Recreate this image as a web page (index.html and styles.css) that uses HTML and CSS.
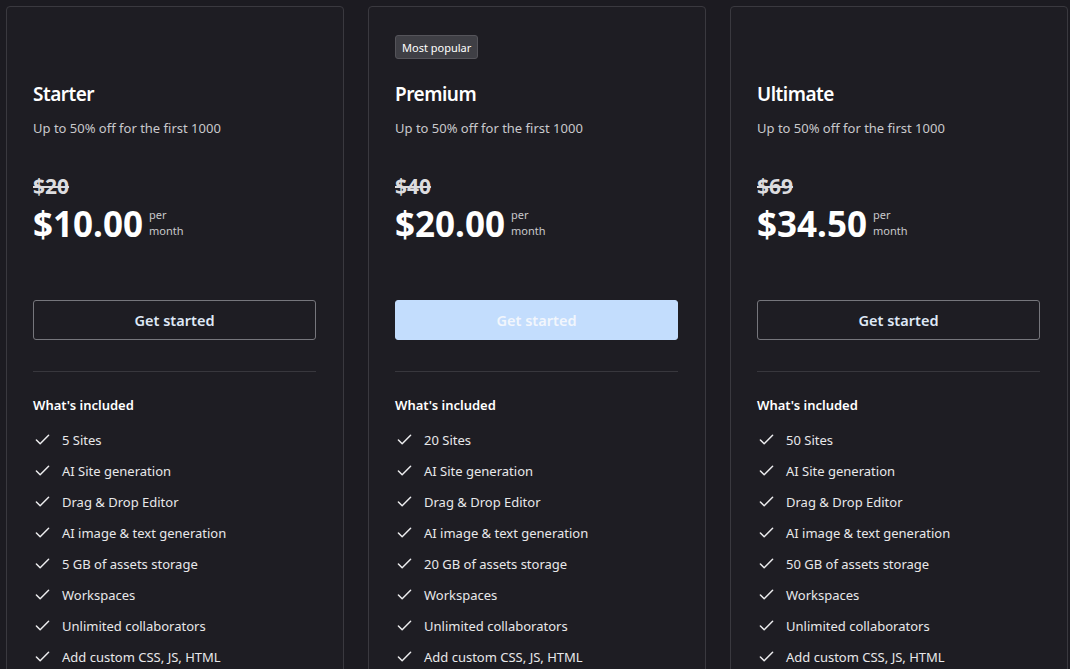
FILE: index.html
```html
<!DOCTYPE html>
<html lang="en">
<head>
<meta charset="utf-8">
<title>Pricing</title>
<link rel="stylesheet" href="styles.css">
</head>
<body>
<main class="plans">
  <section class="card">
    <div class="badge-row"><span class="badge hidden">Most popular</span></div>
    <h2 class="title">Starter</h2>
    <p class="sub">Up to 50% off for the first 1000</p>
    <div class="old">$20</div>
    <div class="price-row"><span class="price">$10.00</span><span class="per">per<br>month</span></div>
    <button class="btn btn-outline">Get started</button>
    <hr class="divider">
    <h3 class="incl">What's included</h3>
    <ul class="features">
      <li><svg class="chk" viewBox="0 0 16 16"><path d="M1.5 8.5l4 4L14.5 3.5"/></svg>5 Sites</li>
      <li><svg class="chk" viewBox="0 0 16 16"><path d="M1.5 8.5l4 4L14.5 3.5"/></svg>AI Site generation</li>
      <li><svg class="chk" viewBox="0 0 16 16"><path d="M1.5 8.5l4 4L14.5 3.5"/></svg>Drag &amp; Drop Editor</li>
      <li><svg class="chk" viewBox="0 0 16 16"><path d="M1.5 8.5l4 4L14.5 3.5"/></svg>AI image &amp; text generation</li>
      <li><svg class="chk" viewBox="0 0 16 16"><path d="M1.5 8.5l4 4L14.5 3.5"/></svg>5 GB of assets storage</li>
      <li><svg class="chk" viewBox="0 0 16 16"><path d="M1.5 8.5l4 4L14.5 3.5"/></svg>Workspaces</li>
      <li><svg class="chk" viewBox="0 0 16 16"><path d="M1.5 8.5l4 4L14.5 3.5"/></svg>Unlimited collaborators</li>
      <li><svg class="chk" viewBox="0 0 16 16"><path d="M1.5 8.5l4 4L14.5 3.5"/></svg>Add custom CSS, JS, HTML</li>
    </ul>
  </section>
  <section class="card">
    <div class="badge-row"><span class="badge">Most popular</span></div>
    <h2 class="title">Premium</h2>
    <p class="sub">Up to 50% off for the first 1000</p>
    <div class="old">$40</div>
    <div class="price-row"><span class="price">$20.00</span><span class="per">per<br>month</span></div>
    <button class="btn btn-primary">Get started</button>
    <hr class="divider">
    <h3 class="incl">What's included</h3>
    <ul class="features">
      <li><svg class="chk" viewBox="0 0 16 16"><path d="M1.5 8.5l4 4L14.5 3.5"/></svg>20 Sites</li>
      <li><svg class="chk" viewBox="0 0 16 16"><path d="M1.5 8.5l4 4L14.5 3.5"/></svg>AI Site generation</li>
      <li><svg class="chk" viewBox="0 0 16 16"><path d="M1.5 8.5l4 4L14.5 3.5"/></svg>Drag &amp; Drop Editor</li>
      <li><svg class="chk" viewBox="0 0 16 16"><path d="M1.5 8.5l4 4L14.5 3.5"/></svg>AI image &amp; text generation</li>
      <li><svg class="chk" viewBox="0 0 16 16"><path d="M1.5 8.5l4 4L14.5 3.5"/></svg>20 GB of assets storage</li>
      <li><svg class="chk" viewBox="0 0 16 16"><path d="M1.5 8.5l4 4L14.5 3.5"/></svg>Workspaces</li>
      <li><svg class="chk" viewBox="0 0 16 16"><path d="M1.5 8.5l4 4L14.5 3.5"/></svg>Unlimited collaborators</li>
      <li><svg class="chk" viewBox="0 0 16 16"><path d="M1.5 8.5l4 4L14.5 3.5"/></svg>Add custom CSS, JS, HTML</li>
    </ul>
  </section>
  <section class="card">
    <div class="badge-row"><span class="badge hidden">Most popular</span></div>
    <h2 class="title">Ultimate</h2>
    <p class="sub">Up to 50% off for the first 1000</p>
    <div class="old">$69</div>
    <div class="price-row"><span class="price">$34.50</span><span class="per">per<br>month</span></div>
    <button class="btn btn-outline">Get started</button>
    <hr class="divider">
    <h3 class="incl">What's included</h3>
    <ul class="features">
      <li><svg class="chk" viewBox="0 0 16 16"><path d="M1.5 8.5l4 4L14.5 3.5"/></svg>50 Sites</li>
      <li><svg class="chk" viewBox="0 0 16 16"><path d="M1.5 8.5l4 4L14.5 3.5"/></svg>AI Site generation</li>
      <li><svg class="chk" viewBox="0 0 16 16"><path d="M1.5 8.5l4 4L14.5 3.5"/></svg>Drag &amp; Drop Editor</li>
      <li><svg class="chk" viewBox="0 0 16 16"><path d="M1.5 8.5l4 4L14.5 3.5"/></svg>AI image &amp; text generation</li>
      <li><svg class="chk" viewBox="0 0 16 16"><path d="M1.5 8.5l4 4L14.5 3.5"/></svg>50 GB of assets storage</li>
      <li><svg class="chk" viewBox="0 0 16 16"><path d="M1.5 8.5l4 4L14.5 3.5"/></svg>Workspaces</li>
      <li><svg class="chk" viewBox="0 0 16 16"><path d="M1.5 8.5l4 4L14.5 3.5"/></svg>Unlimited collaborators</li>
      <li><svg class="chk" viewBox="0 0 16 16"><path d="M1.5 8.5l4 4L14.5 3.5"/></svg>Add custom CSS, JS, HTML</li>
    </ul>
  </section>
</main>
</body>
</html>
```

FILE: styles.css
```css
* { box-sizing: border-box; }
html, body {
  margin: 0;
  background: #1c1b21;
  overflow: hidden;
}
body {
  font-family: "Noto Sans", "Open Sans", sans-serif;
  color: #ececee;
}
.plans {
  display: grid;
  grid-template-columns: 338px 338px 338px;
  gap: 24px;
  padding: 6px;
  width: 1100px;
}
.card {
  border: 1px solid #3a393f;
  border-radius: 4px;
  background: #1e1d23;
  padding: 28px 27px 0 26px;
  height: 700px;
  display: flex;
  flex-direction: column;
}
.badge-row { height: 24px; display: flex; }
.badge {
  display: inline-flex;
  align-items: center;
  height: 24px;
  padding: 0 6px;
  background: #3f3f45;
  border: 1px solid #55545a;
  border-radius: 3px;
  font-size: 11px;
  color: #ffffff;
}
.badge.hidden { visibility: hidden; }
.title {
  margin: 21px 0 0;
  font-size: 19px;
  line-height: 28px;
  font-weight: 600;
  letter-spacing: -0.5px;
  color: #ffffff;
}
.sub {
  margin: 10px 0 0;
  font-size: 13px;
  line-height: 20px;
  color: #c9c9cc;
}
.old {
  margin-top: 34px;
  font-size: 21px;
  line-height: 28px;
  font-weight: 700;
  color: #dcdcdf;
  text-decoration: line-through;
  text-decoration-thickness: 2px;
}
.price-row {
  margin-top: 2px;
  display: flex;
  align-items: flex-start;
  gap: 6px;
}
.price {
  font-size: 35px;
  line-height: 44px;
  font-weight: 700;
  color: #ffffff;
}
.per {
  padding-top: 5px;
  font-size: 11px;
  line-height: 16px;
  color: #c9c9cc;
}
.btn {
  margin-top: 54px;
  height: 40px;
  width: 100%;
  border-radius: 3px;
  font-family: inherit;
  font-size: 14.5px;
  font-weight: 600;
  cursor: pointer;
}
.btn-outline {
  background: transparent;
  border: 1px solid #76767c;
  color: #dfe8f6;
}
.btn-primary {
  background: #c3ddfd;
  border: 1px solid #c3ddfd;
  color: #f2f6fc;
}
.divider {
  margin: 31px 0 0;
  border: 0;
  border-top: 1px solid #38373d;
  height: 0;
}
.incl {
  margin: 23px 0 0;
  font-size: 13px;
  line-height: 20px;
  font-weight: 600;
  color: #ffffff;
}
.features {
  list-style: none;
  margin: 9px 0 0;
  padding: 0;
}
.features li {
  display: flex;
  align-items: center;
  height: 31px;
  font-size: 13px;
  color: #e8e8ea;
}
.chk {
  width: 15px;
  height: 15px;
  margin: 0 12px 0 2px;
  fill: none;
  stroke: #ececee;
  stroke-width: 1.6;
  stroke-linecap: round;
  stroke-linejoin: round;
  flex-shrink: 0;
}
```
